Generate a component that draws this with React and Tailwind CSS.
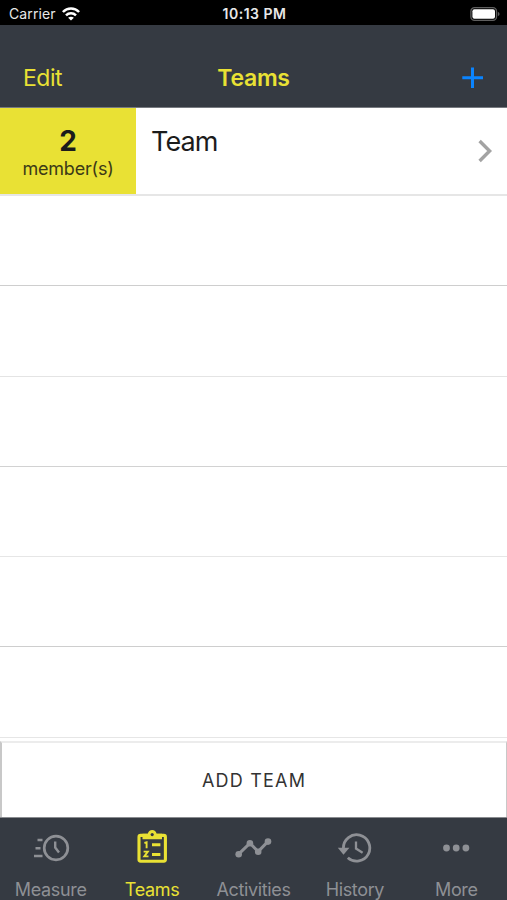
import React, { useState } from "react";

function WifiIcon() {
  return (
    <svg width="18" height="14" viewBox="0 0 18 14" fill="none" stroke="#fff" strokeWidth="2.5">
      <path d="M0.9 5C5.4 0.3 12.6 0.3 17.1 5" />
      <path d="M4 8.3C6.8 5.5 11.2 5.5 14 8.3" />
      <path d="M9 13.6L6.1 10.8C7.8 9.4 10.2 9.4 11.9 10.8Z" fill="#fff" stroke="none" />
    </svg>
  );
}

function BatteryIcon() {
  return (
    <svg width="30" height="14" viewBox="0 0 30 14" fill="none">
      <rect x="0.9" y="0.7" width="25.6" height="12.6" rx="3.6" stroke="#5f5f5f" strokeWidth="1.3" />
      <rect x="2.4" y="2.2" width="22.6" height="9.6" rx="2" fill="#fff" />
      <path d="M27.8 4.8Q29.6 5.6 29.6 7T27.8 9.2Z" fill="#5f5f5f" />
    </svg>
  );
}

function MeasureIcon() {
  return (
    <svg width="40" height="34" viewBox="0 0 40 34" fill="none" stroke="currentColor" strokeWidth="2.7">
      <circle cx="25" cy="17" r="11.8" />
      <path d="M24.2 10.5V16.6L28 21.6" strokeWidth="2.4" />
      <path d="M6.5 9H11.5M4.5 17.2H9.5M3 25H11.5" strokeWidth="2.6" />
    </svg>
  );
}

function TeamsIcon() {
  return (
    <svg className="overflow-visible" width="40" height="34" viewBox="0 0 40 34" fill="none" stroke="currentColor">
      <rect x="7" y="4.4" width="26.4" height="25.8" rx="1.6" strokeWidth="3.1" />
      <path d="M10.5 2.8H15.8C16.2 0.6 18 -1 20.2 -1S24.2 0.6 24.6 2.8H30V8.2H10.5Z" fill="currentColor" stroke="none" />
      <circle cx="20.2" cy="3.6" r="1.6" fill="#353a42" stroke="none" />
      <path d="M12.4 12L14.6 11.3V17.2" strokeWidth="1.9" />
      <path d="M11.6 20.6H15.8L12.3 25.4H16.5" strokeWidth="1.9" />
      <path d="M20 13.8H28.4M20 23.5H28.4" strokeWidth="3.1" />
    </svg>
  );
}

function ActivitiesIcon() {
  return (
    <svg width="40" height="34" viewBox="0 0 40 34" fill="currentColor" stroke="currentColor">
      <path d="M5.6 23.2L17 12.2L25.2 20.6L35 10.4" fill="none" strokeWidth="3" />
      <g stroke="none">
        <circle cx="5.7" cy="23.3" r="3.3" />
        <circle cx="16.9" cy="12.3" r="3.3" />
        <circle cx="25.2" cy="20.7" r="3.3" />
        <circle cx="35" cy="10.6" r="3.3" />
      </g>
    </svg>
  );
}

function HistoryIcon() {
  return (
    <svg width="40" height="34" viewBox="0 0 40 34" fill="none" stroke="currentColor" strokeWidth="2.8">
      <path d="M8.4 17A13.2 13.2 0 1 1 12.8 26.8" />
      <path d="M2.8 16.8H14.4L8.5 23.8Z" fill="currentColor" stroke="none" />
      <path d="M21 10.5V17.6L27.6 21.7" strokeWidth="2.3" />
    </svg>
  );
}

function MoreIcon() {
  return (
    <svg width="40" height="34" viewBox="0 0 40 34" fill="currentColor">
      <circle cx="10.5" cy="17" r="3.4" />
      <circle cx="20.2" cy="17" r="3.4" />
      <circle cx="29.9" cy="17" r="3.4" />
    </svg>
  );
}

const tabs = [
  { name: "Measure", Icon: MeasureIcon },
  { name: "Teams", Icon: TeamsIcon },
  { name: "Activities", Icon: ActivitiesIcon },
  { name: "History", Icon: HistoryIcon },
  { name: "More", Icon: MoreIcon },
];

// empty rows under the last team
const emptyRows = [
  "h-[90px] border-[#cecece]",
  "h-[91px] border-[#e4e4e4]",
  "h-[90px] border-[#d2d2d2]",
  "h-[90px] border-[#e6e6e6]",
  "h-[90px] border-[#cecece]",
  "h-[91px] border-[#e6e6e6]",
];

export default function App() {
  const [active, setActive] = useState("Teams");

  return (
    <div className="flex h-[900px] w-[507px] flex-col overflow-hidden bg-white font-['Inter','Liberation_Sans',sans-serif]">
      {/* Status bar */}
      <div className="grid h-[25px] shrink-0 grid-cols-3 items-center bg-black pr-[7px] pl-[9px] text-[#e8e8e8]">
        <div className="flex items-center gap-[6px] pt-[2px]">
          <span className="text-[14px] tracking-[0.1px]">Carrier</span>
          <WifiIcon />
        </div>
        <span className="pt-[2px] text-center text-[14px] font-semibold tracking-[0.5px]">10:13 PM</span>
        <div className="flex justify-end pt-[2px]">
          <BatteryIcon />
        </div>
      </div>

      {/* Header */}
      <header className="grid h-[83px] shrink-0 grid-cols-3 items-center border-b border-[#777a80] bg-[#353a42] px-[23px] pt-[23px] text-[#e9e134]">
        <button className="text-left text-[23px] leading-7 tracking-[-0.5px]">Edit</button>
        <h1 className="text-center text-[23px] leading-7 font-semibold tracking-[-0.3px]">Teams</h1>
        <button className="flex justify-end" aria-label="Add">
          <svg width="22" height="22" viewBox="0 0 22 22" stroke="#0a84ff" strokeWidth="3">
            <path d="M10.5 0.5V21M0.3 10.8H21" />
          </svg>
        </button>
      </header>

      {/* Team list */}
      <main className="flex-1">
        <div className="flex h-[88px] border-b-2 border-[#e6e6e6]">
          <div className="flex w-[136px] flex-col items-center bg-[#e9e134] pt-[17px] text-[#1c1c1c]">
            <span className="text-[28px] leading-8 font-bold">2</span>
            <span className="text-[18px] leading-6 tracking-[-0.2px] text-[#3c3a17]">member(s)</span>
          </div>
          <span className="pt-[18px] pl-[15px] text-[27px] leading-8 tracking-[-0.9px] text-[#1c1c1c]">Team</span>
          <svg className="mt-[31px] mr-[14px] ml-auto" width="16" height="24" viewBox="0 0 16 24" fill="none" stroke="#a3a3a3" strokeWidth="3.4">
            <path d="M2.6 2L12.6 12L2.6 22" />
          </svg>
        </div>
        {emptyRows.map((row, i) => (
          <div key={i} className={`border-b ${row}`} />
        ))}
      </main>

      <button className="h-[76px] shrink-0 border-t-2 border-r border-l-2 border-x-[#c8c8c8] border-t-[#ececec] bg-white pt-px text-[18px] tracking-[1.2px] text-[#333]">
        ADD TEAM
      </button>

      {/* Tab bar */}
      <nav className="grid h-[83px] shrink-0 grid-cols-5 border-t border-[#8a8c90] bg-[#353a42]">
        {tabs.map(({ name, Icon }) => (
          <button
            key={name}
            onClick={() => setActive(name)}
            className={`flex flex-col items-center pt-[13px] ${active === name ? "text-[#e9e134]" : "text-[#8e9095]"}`}
          >
            <Icon />
            <span className="mt-[13px] text-[18px] leading-6 tracking-[-0.35px]">{name}</span>
          </button>
        ))}
      </nav>
    </div>
  );
}
